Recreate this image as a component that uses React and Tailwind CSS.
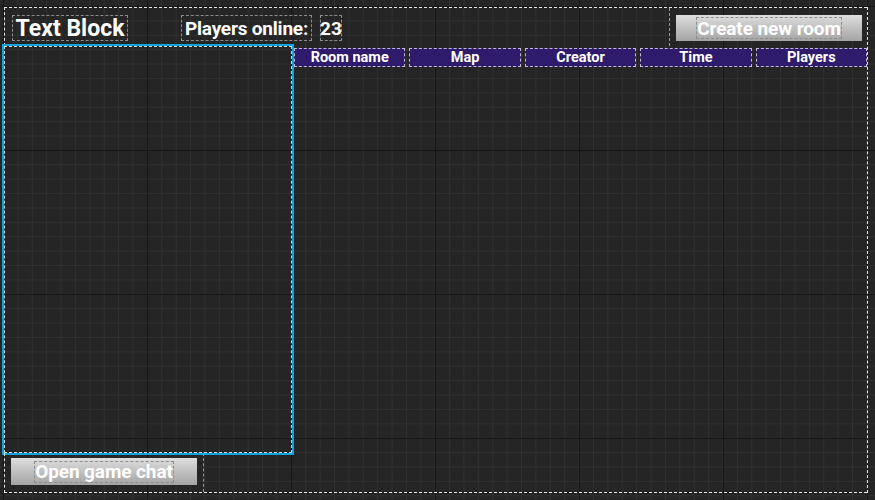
const GRID =
  '[background-image:linear-gradient(to_right,#161616_1px,transparent_1px),linear-gradient(to_bottom,#161616_1px,transparent_1px),linear-gradient(to_right,#303030_1px,transparent_1px),linear-gradient(to_bottom,#303030_1px,transparent_1px)] [background-size:144px_144px,144px_144px,14.4px_14.4px,14.4px_14.4px] [background-position:3px_6px,3px_6px,3px_6px,3px_6px]';

const COLUMNS = ['Room name', 'Map', 'Creator', 'Time', 'Players'];

function Label({ className = '', children }) {
  return (
    <div className={`flex items-center whitespace-nowrap border border-dashed border-[#8c8c8c] font-bold leading-none text-white ${className}`}>
      {children}
    </div>
  );
}

function GrayButton({ className = '', children }) {
  return (
    <div className={`flex items-center justify-center bg-gradient-to-b from-[#dedede] to-[#a4a4a4] ${className}`}>
      {children}
    </div>
  );
}

export default function App() {
  return (
    <div
      className={`h-[500px] w-[875px] overflow-hidden bg-[#252525] pl-[4px] pt-[7px] ${GRID}`}
      style={{ fontFamily: 'Roboto, "Noto Sans", sans-serif' }}
    >
      <div className="flex h-[486px] w-[864px] flex-col border-r border-dashed border-white/90">
        {/* top bar */}
        <div className="flex h-[39px] items-start border-l border-t border-dashed border-white/90">
          <Label className="ml-[7px] mt-[7px] h-[26px] w-[116px] justify-center text-[23px]">Text Block</Label>
          <Label className="ml-[53px] mt-[7px] h-[26px] w-[131px] justify-center text-[19px] tracking-[-0.2px]">Players online:</Label>
          <Label className="ml-[8px] mt-[7px] h-[26px] w-[22px] justify-center text-[19px]">23</Label>
          <div className="ml-auto flex h-full w-[198px] items-start border-l border-dashed border-[#9a9a9a] pl-[6px] pt-[7px]">
            <GrayButton className="h-[26px] w-[186px]">
              <Label className="h-[22px] w-[146px] justify-center text-[19px] tracking-[-0.1px]">Create new room</Label>
            </GrayButton>
          </div>
        </div>

        {/* middle */}
        <div className="flex h-[407px]">
          <div className="h-full w-[288px] border border-dashed border-white/80 outline-2 outline-[#10a4dc]" />
          <div className="flex flex-1 gap-[4px] pl-[2px] pt-[2px]">
            {COLUMNS.map((c) => (
              <div
                key={c}
                className="flex h-[19px] flex-1 items-center justify-center border border-dashed border-white/70 bg-[#2f1b6b] pt-[2px] text-[14.5px] font-bold leading-none text-white"
              >
                {c}
              </div>
            ))}
          </div>
        </div>

        {/* bottom */}
        <div className="flex h-[40px] border-b border-l border-dashed border-white/90">
          <div className="flex h-full w-[199px] items-start border-r border-dashed border-[#9a9a9a] pl-[6px] pt-[5px]">
            <GrayButton className="h-[27px] w-[186px]">
              <Label className="h-[22px] w-[140px] justify-center text-[19px] tracking-[-0.1px]">Open game chat</Label>
            </GrayButton>
          </div>
        </div>
      </div>
    </div>
  );
}
